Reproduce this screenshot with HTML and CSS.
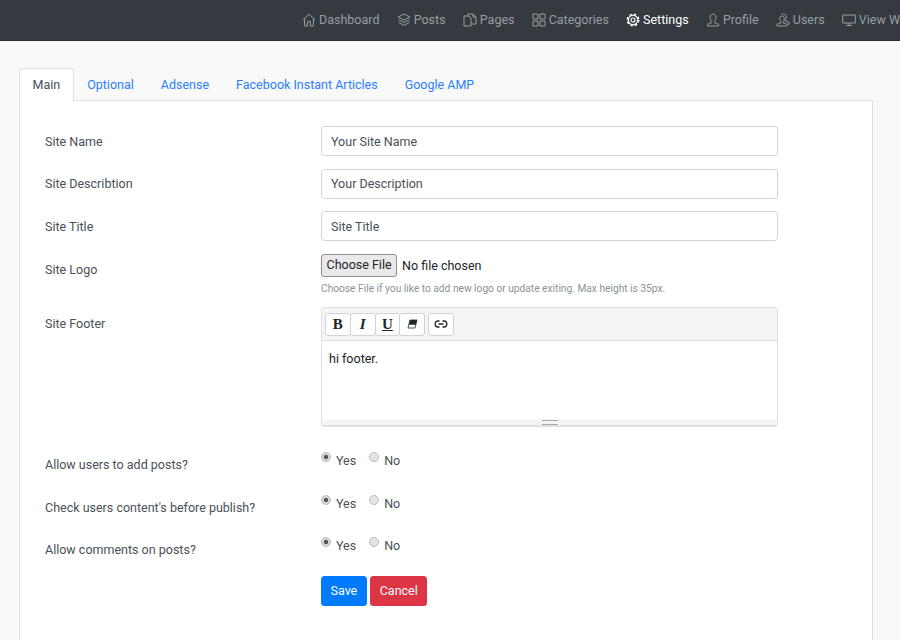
FILE: index.html
```html
<!DOCTYPE html>
<html lang="en">
<head>
    <meta charset="UTF-8">
    <meta name="viewport" content="width=device-width, initial-scale=1.0">
    <title>Settings</title>
    <link rel="stylesheet" href="styles.css">
</head>
<body>
    <nav class="topbar">
        <a class="nav-link" href="#"><svg class="nav-icon" viewBox="0 0 14 14"><path d="M.8 7 7 1.2 13.2 7M2.6 5.6V13H5.6V8.4H8.4V13H11.4V5.6"/></svg>Dashboard</a>
        <a class="nav-link" href="#"><svg class="nav-icon" viewBox="0 0 14 14"><path d="M7 1 13 4 7 7 1 4ZM1.5 6.7 7 9.5 12.5 6.7M1.5 9.4 7 12.5 12.5 9.4"/></svg>Posts</a>
        <a class="nav-link" href="#"><svg class="nav-icon" viewBox="0 0 14 14"><path d="M1 3H6L8 5V13H1ZM5 3V1H10L13 4V11H8M10 1V4H13"/></svg>Pages</a>
        <a class="nav-link" href="#"><svg class="nav-icon" viewBox="0 0 14 14"><path d="M1 1H6V6H1ZM8 1H13V6H8ZM1 8H6V13H1ZM8 8H13V13H8Z"/></svg>Categories</a>
        <a class="nav-link active" href="#"><svg class="nav-icon gear" viewBox="0 0 14 14"><circle cx="7" cy="7" r="2"/><circle cx="7" cy="7" r="4.6"/><circle class="teeth" cx="7" cy="7" r="5.7"/></svg>Settings</a>
        <a class="nav-link" href="#"><svg class="nav-icon" viewBox="0 0 14 14"><path d="M7 1C5 1 4 2.5 4 4.2 4 6 5 8 5.6 8.6V9.6L1.5 11.4V13H12.5V11.4L8.4 9.6V8.6C9 8 10 6 10 4.2 10 2.5 9 1 7 1Z"/></svg>Profile</a>
        <a class="nav-link" href="#"><svg class="nav-icon" viewBox="0 0 14 14"><path d="M6 3C4.6 3 3.7 4.2 3.7 5.6 3.7 7 4.5 8.4 5 9V9.8L1 11.2V13H11V11.2L7 9.8V9C7.5 8.4 8.3 7 8.3 5.6 8.3 4.2 7.4 3 6 3ZM5.5 1.6C6 1.2 6.6 1 7.5 1 9.4 1 10.4 2.4 10.4 4 10.4 5.4 9.8 6.6 9.2 7.3V8L13 9.4V11.2H11.6"/></svg>Users</a>
        <a class="nav-link" href="#"><svg class="nav-icon" viewBox="0 0 14 14"><path d="M.7 2H13.3V10H.7ZM7 10V12.5M4 12.5H10"/></svg>View W</a>
    </nav>

    <main class="content">
        <ul class="tabs">
            <li class="tab active">Main</li>
            <li class="tab">Optional</li>
            <li class="tab">Adsense</li>
            <li class="tab">Facebook Instant Articles</li>
            <li class="tab">Google AMP</li>
        </ul>

        <form class="card">
            <div class="form-row">
                <label class="form-label" for="site-name">Site Name</label>
                <input class="form-input" type="text" id="site-name" value="Your Site Name">
            </div>
            <div class="form-row">
                <label class="form-label" for="site-desc">Site Describtion</label>
                <input class="form-input" type="text" id="site-desc" value="Your Description">
            </div>
            <div class="form-row">
                <label class="form-label" for="site-title">Site Title</label>
                <input class="form-input" type="text" id="site-title" value="Site Title">
            </div>
            <div class="form-row logo-row">
                <label class="form-label" for="site-logo">Site Logo</label>
                <div>
                    <input class="file-input" type="file" id="site-logo">
                    <small class="hint">Choose File if you like to add new logo or update exiting. Max height is 35px.</small>
                </div>
            </div>
            <div class="form-row footer-row">
                <label class="form-label">Site Footer</label>
                <div class="editor">
                    <div class="editor-toolbar">
                        <div class="btn-group">
                            <span class="tool-btn tool-bold">B</span>
                            <span class="tool-btn tool-italic">I</span>
                            <span class="tool-btn tool-under">U</span>
                            <span class="tool-btn"><svg class="tool-icon" viewBox="0 0 12 12"><path class="eraser" d="M4 2H11L9 10H2Z"/><path class="eraser-top" d="M4 2H11L9.8 6.8H2.8Z"/></svg></span>
                        </div>
                        <div class="btn-group">
                            <span class="tool-btn"><svg class="tool-icon link-icon" viewBox="0 0 14 12"><path d="M5.5 3H4C2.5 3 1.2 4.2 1.2 6S2.5 9 4 9H5.5M8.5 3H10C11.5 3 12.8 4.2 12.8 6S11.5 9 10 9H8.5M4.5 6H9.5"/></svg></span>
                        </div>
                    </div>
                    <div class="editor-body">hi footer.</div>
                    <div class="editor-status"><span class="grip"></span></div>
                </div>
            </div>
            <div class="form-row option-row">
                <label class="form-label">Allow users to add posts?</label>
                <div class="radios">
                    <label class="radio"><input type="radio" name="add-posts" checked>Yes</label>
                    <label class="radio"><input type="radio" name="add-posts">No</label>
                </div>
            </div>
            <div class="form-row option-row">
                <label class="form-label">Check users content's before publish?</label>
                <div class="radios">
                    <label class="radio"><input type="radio" name="check-content" checked>Yes</label>
                    <label class="radio"><input type="radio" name="check-content">No</label>
                </div>
            </div>
            <div class="form-row option-row">
                <label class="form-label">Allow comments on posts?</label>
                <div class="radios">
                    <label class="radio"><input type="radio" name="comments" checked>Yes</label>
                    <label class="radio"><input type="radio" name="comments">No</label>
                </div>
            </div>
            <div class="form-row actions">
                <span></span>
                <div class="buttons">
                    <button class="btn btn-save" type="button">Save</button>
                    <button class="btn btn-cancel" type="button">Cancel</button>
                </div>
            </div>
        </form>
    </main>
</body>
</html>
```

FILE: styles.css
```css
html, body { height: 100%; overflow: hidden; }
body { margin: 0; background: #f9f9f9; color: #495057; font-family: "Roboto", "Noto Sans", sans-serif; font-size: 12.5px; line-height: 20px; }

.topbar { display: flex; gap: 17.2px; height: 41px; padding-left: 302px; background: #343a40; border-bottom: 1px solid #2b3035; box-sizing: border-box; align-items: center; white-space: nowrap; overflow: hidden; }
.nav-link { display: flex; align-items: center; gap: 3px; color: #9a9da0; text-decoration: none; flex: none; }
.nav-link.active { color: #fff; }
.nav-icon { width: 14px; height: 14px; fill: none; stroke: currentColor; stroke-width: 1; }
.gear circle { stroke-width: 1.2; }
.gear .teeth { stroke-width: 1.6; stroke-dasharray: 2.4 2.1; }

.content { padding: 27px 27px 0 19px; }
.tabs { display: flex; list-style: none; margin: 0; padding: 0; height: 32px; position: relative; z-index: 1; }
.tab { padding: 6px 12.5px; color: #2a7fff; border: 1px solid transparent; border-bottom: 0; border-radius: 3px 3px 0 0; }
.tab.active { color: #495057; background: #fff; border-color: #dee2e6; height: 33px; box-sizing: border-box; }

.card { background: #fff; border: 1px solid #dee2e6; padding: 25px 25px 40px; height: 600px; box-sizing: border-box; }
.form-row { display: grid; grid-template-columns: 276px 457px; margin-bottom: 12.5px; }
.form-label { padding-top: 5.5px; }
.form-input { height: 30px; width: 100%; box-sizing: border-box; padding: 0 9px; border: 1px solid #ced4da; border-radius: 3.5px; color: #495057; font: inherit; outline: none; }

.logo-row { margin-bottom: 11.3px; }
.logo-row .form-label { padding-top: 6px; }
.file-input { display: block; height: 23px; color: #212529; font: inherit; }
.file-input::file-selector-button { height: 23px; margin-right: 5px; padding: 0 4.5px; border: 1px solid #8f8f8f; border-radius: 3px; background: #e9e9e9; color: #212529; font: inherit; }
.hint { display: block; margin-top: 5px; color: #8b9298; font-size: 10.2px; line-height: 14px; }

.editor { border: 1px solid #dee2e6; border-radius: 3px; border-bottom-width: 2px; height: 120px; box-sizing: border-box; display: flex; flex-direction: column; }
.editor-toolbar { display: flex; gap: 4px; height: 33px; padding: 5px 0 0 4px; box-sizing: border-box; background: #f5f5f5; border-bottom: 1px solid #dee2e6; }
.btn-group { display: flex; }
.tool-btn { display: flex; align-items: center; justify-content: center; width: 25.75px; height: 23px; box-sizing: border-box; background: #fff; border: 1px solid #ced4da; margin-left: -1px; color: #212529; border-radius: 3px; }
.tool-bold { font: bold 15px "Liberation Serif", serif; }
.tool-italic { font: italic bold 15px "Liberation Serif", serif; }
.tool-under { font: bold 15px "Liberation Serif", serif; text-decoration: underline; }
.tool-icon { width: 12px; height: 12px; }
.eraser { fill: #fff; stroke: #212529; stroke-width: .8; }
.eraser-top { fill: #212529; }
.link-icon { width: 14px; fill: none; stroke: #212529; stroke-width: 1.3; }
.editor-body { flex: 1; padding: 8px 7px; color: #212529; }
.editor-status { height: 6px; background: #f5f5f5; display: flex; justify-content: center; align-items: flex-end; }
.grip { width: 16px; height: 3px; border-top: 1px solid #a9a9a9; border-bottom: 1px solid #a9a9a9; }
.footer-row { margin-bottom: 23px; }
.footer-row .form-label { padding-top: 7.2px; }

.option-row { margin-bottom: 21px; height: 21.5px; }
.radios { display: flex; gap: 13px; padding-top: 1.5px; }
.radio { display: flex; gap: 5px; align-items: flex-start; }
.radio input { appearance: none; width: 8px; height: 8px; margin: 1px 0 0; border: 1px solid #bbb; border-radius: 50%; background: #e4e4e4; box-sizing: content-box; }
.radio input:checked { background: radial-gradient(circle, #555 0 1.8px, #d8d8d8 2.6px); }

.actions { margin-top: -1px; }
.buttons { display: flex; gap: 3.5px; }
.btn { height: 29.5px; padding: 0 8.5px; border: 1px solid transparent; border-radius: 3.5px; color: #fff; font: inherit; }
.btn-save { background: #007bff; }
.btn-cancel { background: #dc3545; }
```
